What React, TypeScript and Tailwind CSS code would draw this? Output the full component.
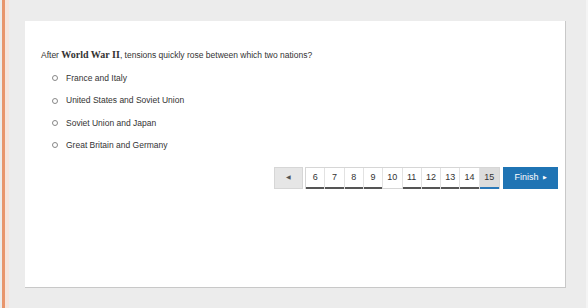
const pages = [
  { n: 6, state: "done" },
  { n: 7, state: "done" },
  { n: 8, state: "done" },
  { n: 9, state: "done" },
  { n: 10, state: "current" },
  { n: 11, state: "done" },
  { n: 12, state: "done" },
  { n: 13, state: "done" },
  { n: 14, state: "done" },
  { n: 15, state: "active" },
];

const options = [
  "France and Italy",
  "United States and Soviet Union",
  "Soviet Union and Japan",
  "Great Britain and Germany",
];

export default function App() {
  return (
    <div
      className="flex h-[308px] w-[588px] bg-[#ececec] text-[#333]"
      style={{ fontFamily: '"Liberation Sans", Arial, sans-serif' }}
    >
      {/* left accent */}
      <div className="ml-[2px] w-[3px] bg-[#e8956c]" />
      <div className="w-[4px] bg-[#f6e4dc]" />

      <div className="flex flex-1 flex-col pl-[16px] pr-[20px] pt-[21px] pb-[20px]">
        <div className="flex-1 border-r border-b border-[#c8c8c8] bg-white pl-[16px] pr-[7px] pt-[28px]">
          <p className="text-[8.5px] leading-[12px]">
            After{" "}
            <span className="font-bold text-[10px]" style={{ fontFamily: '"Liberation Serif", serif' }}>
              World War II
            </span>
            , tensions quickly rose between which two nations?
          </p>

          <div className="mt-[6px] flex flex-col">
            {options.map((o) => (
              <label key={o} className="flex h-[22.4px] items-center text-[8.5px]">
                <span className="ml-[11px] h-[6px] w-[6px] rounded-full border border-[#888]" />
                <span className="ml-[8px]">{o}</span>
              </label>
            ))}
          </div>

          <div className="mt-[10px] flex justify-end">
            <button className="flex h-[22px] w-[29px] items-center justify-center border border-[#d6d6d6] bg-[#e6e6e6] text-[6px] text-[#555]">
              ◀
            </button>
            <div className="ml-[2px] flex h-[22px] border border-[#d6d6d6]">
              {pages.map((p) => (
                <div
                  key={p.n}
                  className={
                    "relative flex w-[19.3px] items-center justify-center border-r border-[#e2e2e2] text-[9px] last:border-r-0 " +
                    (p.state === "active" ? "bg-[#dcdcdc]" : "bg-white")
                  }
                >
                  {p.n}
                  {p.state === "done" && (
                    <span className="absolute bottom-[-1px] left-0 right-0 h-[2px] bg-[#555]" />
                  )}
                  {p.state === "active" && (
                    <span className="absolute bottom-[-1px] left-0 right-0 h-[2px] bg-[#2a78b8]" />
                  )}
                </div>
              ))}
            </div>
            <button className="ml-[3px] flex h-[22px] w-[55px] items-center justify-center gap-[4px] bg-[#1f74b4] text-[9px] text-white">
              Finish <span className="text-[5px]">▶</span>
            </button>
          </div>
        </div>
      </div>
      <div className="w-[2px] bg-[#f4f4f4]" />
    </div>
  );
}
